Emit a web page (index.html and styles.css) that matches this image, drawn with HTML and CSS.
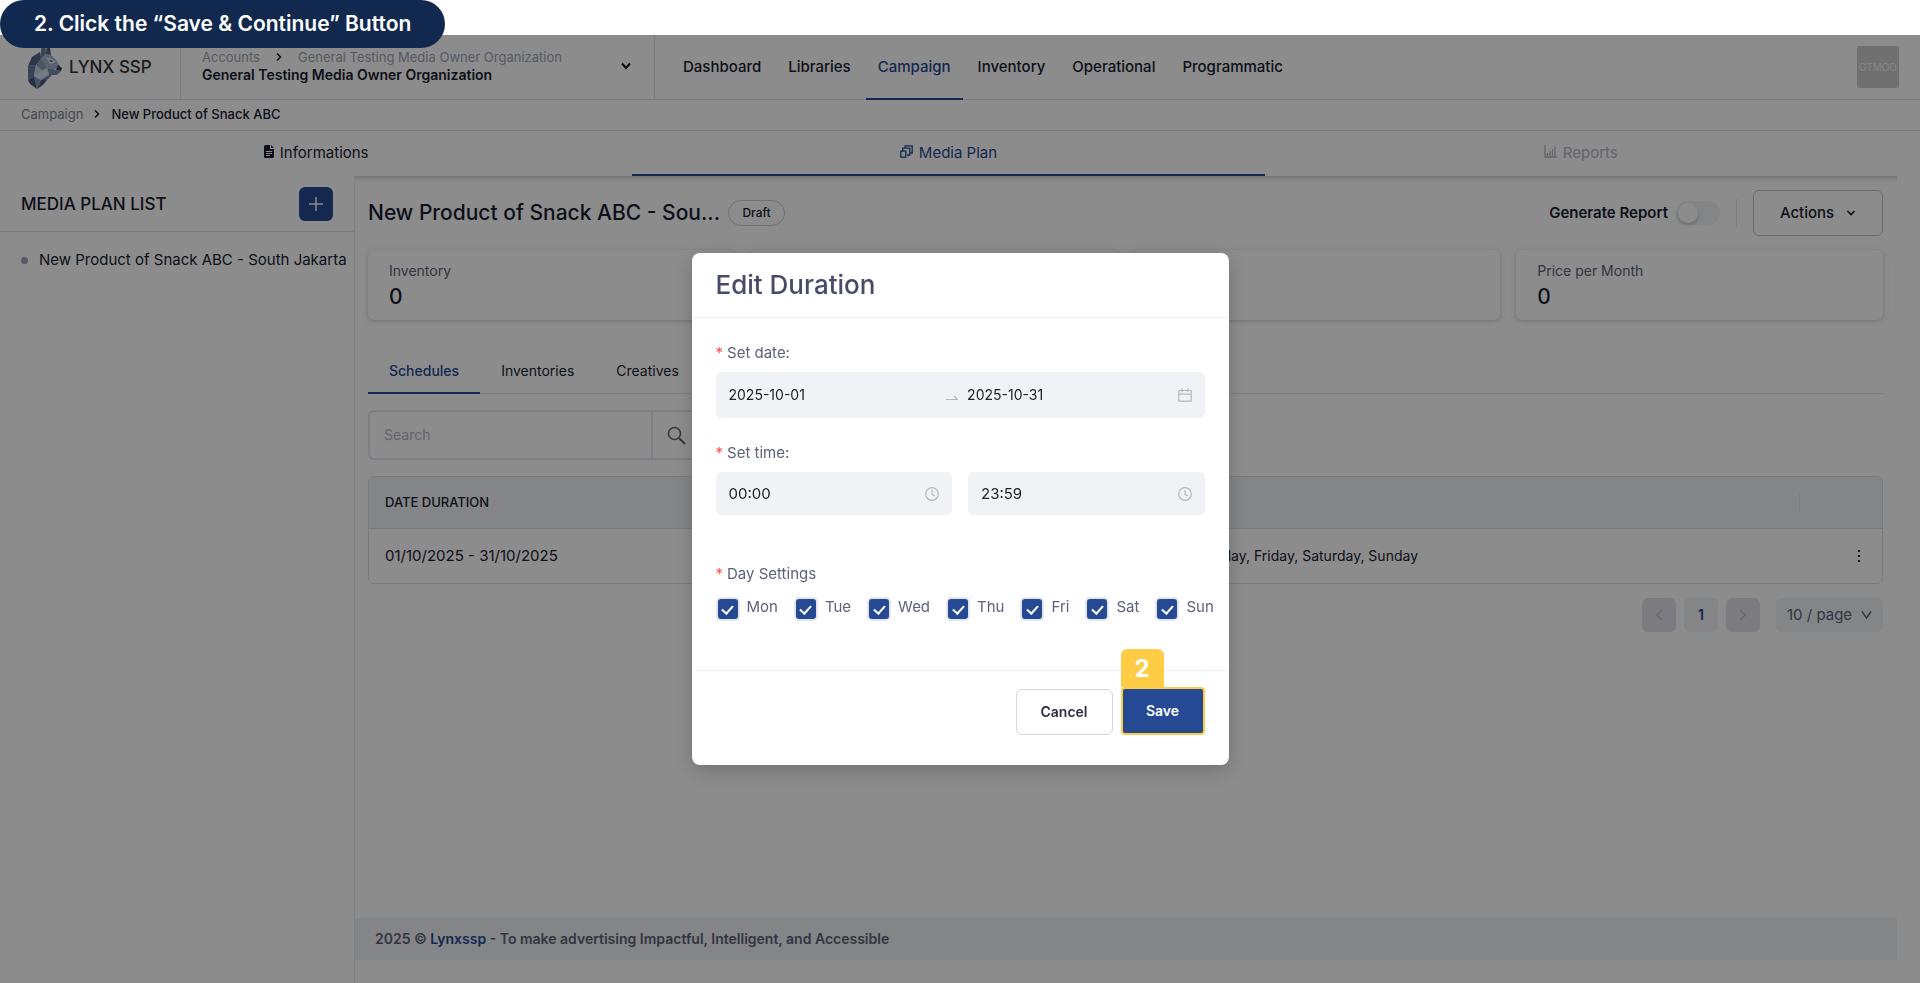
FILE: index.html
```html
<!DOCTYPE html>
<html lang="en">
<head>
<meta charset="utf-8">
<title>Lynx SSP - Media Plan</title>
<link rel="stylesheet" href="styles.css">
</head>
<body>
<div class="callout">2. Click the “Save &amp; Continue” Button</div>
<div class="app">
  <header class="header">
    <a class="logo" href="#">
      <svg width="36" height="54" viewBox="0 0 36 54" aria-hidden="true">
        <path d="M15 4 18 2 19 14 13 19Z" fill="#6a7a96"/>
        <path d="M20 3 23 8 24 15 19 14Z" fill="#52617d"/>
        <path d="M13 12 5 17 1 26 9 25 14 19Z" fill="#53658a"/>
        <path d="M13 19 19 14 24 15 29 20 33 26 27 30 20 28Z" fill="#a3b2cb"/>
        <path d="M19 17 25 19 29 22 23 24Z" fill="#e1e9f5"/>
        <path d="M22 20 26 21 24 22Z" fill="#26344f"/>
        <path d="M31 25 35 28 34 31 29 30Z" fill="#33435f"/>
        <path d="M20 28 29 30 34 31 30 35 22 35Z" fill="#7d8fae"/>
        <path d="M1 26 9 25 7 36 1 40Z" fill="#6b7da0"/>
        <path d="M9 25 14 19 20 28 15 31Z" fill="#8a9bb8"/>
        <path d="M9 25 15 31 7 36Z" fill="#c2cee2"/>
        <path d="M15 31 20 28 22 35 14 40 7 36Z" fill="#d3ddee"/>
        <path d="M22 35 26 34 20 40 14 40Z" fill="#6b7da0"/>
        <path d="M7 36 14 40 10 49Z" fill="#8396b5"/>
        <path d="M14 40 20 40 16 45 10 49Z" fill="#4d5f83"/>
        <path d="M1 40 7 36 10 49 3 44Z" fill="#46587c"/>
      </svg>
      <span>LYNX SSP</span>
    </a>
    <button class="account" type="button">
      <span class="account-text">
        <span class="account-path"><span>Accounts</span>
          <svg width="6" height="10" viewBox="0 0 6 10" aria-hidden="true"><path d="M1 1.500 4.500 5 1 8.500" fill="none" stroke="#181c32" stroke-width="1.500"/></svg>
          <span>General Testing Media Owner Organization</span></span>
        <strong>General Testing Media Owner Organization</strong>
      </span>
      <svg width="10" height="8" viewBox="0 0 10 8" aria-hidden="true"><path d="M1 1.500 5 6 9 1.500" fill="none" stroke="#111" stroke-width="2"/></svg>
    </button>
    <nav class="nav">
      <a href="#">Dashboard</a><a href="#">Libraries</a><a class="active" href="#">Campaign</a><a href="#">Inventory</a><a href="#">Operational</a><a href="#">Programmatic</a>
    </nav>
    <div class="avatar">GTMOO</div>
  </header>
  <nav class="crumbs"><a href="#">Campaign</a>
    <svg width="6" height="10" viewBox="0 0 6 10" aria-hidden="true"><path d="M1 1.500 4.500 5 1 8.500" fill="none" stroke="#181c32" stroke-width="1.500"/></svg>
    <span>New Product of Snack ABC</span></nav>
  <div class="page">
    <nav class="tabs">
      <a href="#"><svg width="10" height="13" viewBox="0 0 10 13" aria-hidden="true"><path d="M1.500 0H6v4h4v7.500Q10 13 8.500 13h-7Q0 13 0 11.500v-10Q0 0 1.500 0ZM7 0l3 3H7Z" fill="#181c32"/><path d="M2 6.500h6M2 8.500h6M2 10.500h4" stroke="#fff"/></svg>Informations</a>
      <a class="active" href="#"><svg width="13" height="13" viewBox="0 0 13 13" aria-hidden="true"><path d="M5 3V.8h7.200V8H9.700M2.800 6V3.200h7V10H7M.8 6.200h5v6h-5Z" fill="none" stroke="#254a93" stroke-width="1.300"/></svg>Media Plan</a>
      <a class="off" href="#"><svg width="13" height="13" viewBox="0 0 13 13" aria-hidden="true"><path d="M1 0v12h12M3.500 11V8M6 11V6M8.500 11V4M11 11V1.500" fill="none" stroke="#b5b5c3" stroke-width="1.300"/></svg>Reports</a>
    </nav>
    <div class="columns">
      <aside class="sidebar">
        <div class="side-head"><h2>MEDIA PLAN LIST</h2>
          <button type="button" class="add" aria-label="Add media plan"><svg width="14" height="14" viewBox="0 0 14 14" aria-hidden="true"><path d="M7 0v14M0 7h14" stroke="#fff" stroke-width="1.500"/></svg></button></div>
        <a class="plan" href="#"><i class="dot"></i>New Product of Snack ABC - South Jakarta</a>
      </aside>
      <div class="content">
        <main class="main">
          <div class="title-row">
            <h1>New Product of Snack ABC - Sou...</h1><span class="draft">Draft</span>
            <label class="report" for="gen">Generate Report<input id="gen" type="checkbox" role="switch"></label>
            <i class="rule"></i>
            <button type="button" class="actions">Actions<svg width="10" height="8" viewBox="0 0 10 8" aria-hidden="true"><path d="M1.500 2 5 5.500 8.500 2" fill="none" stroke="#181c32" stroke-width="1.600"/></svg></button>
          </div>
          <section class="cards">
            <div class="card"><span>Inventory</span><b>0</b></div>
            <div class="card"></div>
            <div class="card"></div>
            <div class="card"><span>Price per Month</span><b>0</b></div>
          </section>
          <nav class="subtabs"><a class="active" href="#">Schedules</a><a href="#">Inventories</a><a href="#">Creatives</a></nav>
          <div class="search"><input type="text" placeholder="Search" aria-label="Search">
            <button type="button" aria-label="Run search"><svg width="19" height="19" viewBox="0 0 19 19" aria-hidden="true"><circle cx="7.500" cy="7.500" r="6" fill="none" stroke="#666" stroke-width="1.600"/><path d="m12 12 6 6" stroke="#666" stroke-width="2"/></svg></button></div>
          <table class="table">
            <thead><tr><th>DATE DURATION</th><th></th><th class="menu"><i></i></th></tr></thead>
            <tbody><tr><td>01/10/2025 - 31/10/2025</td><td class="days-cell"><span>Thursday, Friday, Saturday, Sunday</span></td><td class="menu"><button type="button" aria-label="Row menu"><svg width="4" height="12" viewBox="0 0 4 12" aria-hidden="true"><path d="M1 0h2v2H1ZM1 5h2v2H1ZM1 10h2v2H1Z" fill="#181c32"/></svg></button></td></tr></tbody>
          </table>
          <div class="pager">
            <button type="button" class="step" aria-label="Previous page"><svg width="8" height="12" viewBox="0 0 8 12" aria-hidden="true"><path d="M7 1 1.500 6 7 11" fill="none" stroke="#a1a5b7"/></svg></button>
            <button type="button" class="current">1</button>
            <button type="button" class="step" aria-label="Next page"><svg width="8" height="12" viewBox="0 0 8 12" aria-hidden="true"><path d="M1 1 6.500 6 1 11" fill="none" stroke="#a1a5b7"/></svg></button>
            <label class="size"><select aria-label="Rows per page"><option>10 / page</option></select><svg width="11" height="8" viewBox="0 0 11 8" aria-hidden="true"><path d="M1 .5 5.500 7 10 .5" fill="none" stroke="#5e6278" stroke-width="1.400"/></svg></label>
          </div>
        </main>
        <footer class="footer">2025 © <a href="#">Lynxssp</a> - To make advertising Impactful, Intelligent, and Accessible</footer>
      </div>
    </div>
  </div>
</div>
<div class="overlay">
  <form class="modal" role="dialog" aria-labelledby="dlg">
    <h2 class="modal-title" id="dlg">Edit Duration</h2>
    <div class="modal-body">
      <label class="field-label" for="d1"><em>*</em>Set date:</label>
      <div class="field range">
        <input id="d1" type="text" value="2025-10-01">
        <svg width="12" height="12" viewBox="0 0 12 12" aria-hidden="true"><path d="M0 10.500h11.500L8 7" fill="none" stroke="#b5b5bd" stroke-width="1.200"/></svg>
        <input type="text" value="2025-10-31" aria-label="End date">
        <svg width="14" height="14" viewBox="0 0 14 14" aria-hidden="true"><path d="M.8 2.500h12.400v10.700H.8ZM.8 6.200h12.400M4 .3v4M10 .3v4" fill="none" stroke="#b7b8be" stroke-width="1.200"/></svg>
      </div>
      <label class="field-label" for="t1"><em>*</em>Set time:</label>
      <div class="times">
        <div class="field"><input id="t1" type="text" value="00:00"><svg width="14" height="14" viewBox="0 0 14 14" aria-hidden="true"><circle cx="7" cy="7" r="6.300" fill="none" stroke="#b7b8be" stroke-width="1.200"/><path d="M7 3v4.300l2.800 1.700" fill="none" stroke="#b7b8be" stroke-width="1.200"/></svg></div>
        <div class="field"><input type="text" value="23:59" aria-label="End time"><svg width="14" height="14" viewBox="0 0 14 14" aria-hidden="true"><circle cx="7" cy="7" r="6.300" fill="none" stroke="#b7b8be" stroke-width="1.200"/><path d="M7 3v4.300l2.800 1.700" fill="none" stroke="#b7b8be" stroke-width="1.200"/></svg></div>
      </div>
      <div class="field-label"><em>*</em>Day Settings</div>
      <div class="days">
        <label><input type="checkbox" checked>Mon</label>
        <label><input type="checkbox" checked>Tue</label>
        <label><input type="checkbox" checked>Wed</label>
        <label><input type="checkbox" checked>Thu</label>
        <label><input type="checkbox" checked>Fri</label>
        <label><input type="checkbox" checked>Sat</label>
        <label><input type="checkbox" checked>Sun</label>
      </div>
    </div>
    <div class="modal-foot">
      <button type="button" class="cancel">Cancel</button>
      <div class="save-wrap"><span class="badge">2</span><button type="button" class="save">Save</button></div>
    </div>
  </form>
</div>
</body>
</html>
```

FILE: styles.css
```css
* { box-sizing: border-box; }
body { margin: 0; background: #fff; color: #181c32; font: 14px/20px Inter, "Open Sans", sans-serif; overflow: hidden; }
a { color: inherit; text-decoration: none; }
button, input, select { font: inherit; color: inherit; margin: 0; border: 0; background: none; padding: 0; }
h1, h2 { margin: 0; font-weight: 500; }
svg { flex: none; display: block; }
i { display: block; }
.callout { position: absolute; z-index: 3; top: 0; left: 0; height: 48px; padding: 0 34px; border-radius: 24px; background: #11294f; color: #fff; font-size: 21px; font-weight: 600; line-height: 48px; white-space: nowrap; }
.app { margin-top: 35px; min-height: calc(100vh - 35px); display: flex; flex-direction: column; background: #fff; }
.header { display: flex; height: 65px; border-bottom: 1px solid #e0e1e8; }
.logo { width: 181px; padding: 0 0 0 27px; display: flex; align-items: center; gap: 6px; border-right: 1px solid #e0e1e8; font-size: 17px; font-weight: 500; color: #333; white-space: nowrap; }
.account { width: 474px; padding: 0 23px 2px 21px; display: flex; align-items: center; justify-content: space-between; border-right: 1px solid #e0e1e8; text-align: left; }
.account-text { display: flex; flex-direction: column; line-height: 18px; }
.account-path { display: flex; align-items: center; gap: 16px; font-size: 13px; color: #a1a5b7; }
.account strong { font-weight: 600; }
.nav { display: flex; gap: 3px; padding-left: 16px; font-size: 15px; }
.nav a { padding: 0 12px; line-height: 64px; height: 65px; font-weight: 500; }
.nav .active { color: #254a93; border-bottom: 2px solid #254a93; }
.avatar { width: 42px; height: 42px; margin: 11px 21px 0 auto; border-radius: 2px; background: #ccc; color: #f5f5f5; font-size: 10px; line-height: 42px; text-align: center; }
.crumbs { display: flex; align-items: center; gap: 11px; height: 31px; padding: 0 21px 2px; border-bottom: 1px solid #e0e1e8; font-size: 13px; }
.crumbs a { color: #7e8299; }
.crumbs span { font-weight: 500; }
.page { flex: 1; margin-right: 23px; display: flex; flex-direction: column; }
.tabs { display: flex; height: 45px; position: relative; z-index: 1; font-size: 15px; }
.tabs a { flex: 1; display: flex; align-items: center; justify-content: center; gap: 6px; border-bottom: 2px solid transparent; }
.tabs svg { margin-bottom: 2px; }
.tabs .active { color: #254a93; border-color: #254a93; }
.tabs .off { color: #b5b5c3; }
.columns { flex: 1; display: flex; }
.sidebar { width: 355px; border-right: 1px solid #e8e9ee; }
.side-head { display: flex; align-items: center; justify-content: space-between; height: 56px; padding: 0 21px; border-bottom: 1px solid #e0e1e8; }
.side-head h2 { font-size: 17px; }
.add { width: 34px; height: 34px; border-radius: 6px; background: #254a93; display: grid; place-items: center; }
.plan { display: flex; align-items: center; gap: 11px; padding: 18px 0 0 21px; font-size: 15px; white-space: nowrap; }
.dot { width: 7px; height: 7px; border-radius: 50%; background: #a1a5b7; }
.content { flex: 1; min-width: 0; display: flex; flex-direction: column; box-shadow: 0 7px 6px -6px #8889 inset; }
.main { flex: 1; padding: 14px 14px 0 13px; }
.title-row { display: flex; align-items: center; height: 46px; }
h1 { font-size: 21px; white-space: nowrap; line-height: 26px; }
.draft { margin-left: 8px; width: 57px; height: 26px; border: 1px solid #ccc; border-radius: 13px; text-align: center; font-size: 12px; font-weight: 500; line-height: 24px; }
.report { display: flex; align-items: center; gap: 8px; margin-left: auto; font-size: 15px; font-weight: 600; }
.report input { appearance: none; width: 44px; height: 24px; padding: 2px; border-radius: 12px; background: #f1f2f6; }
.report input::before { content: ""; display: block; width: 20px; height: 20px; border-radius: 50%; background: #fff; box-shadow: 0 2px 4px #0003; }
.rule { width: 1px; height: 28px; margin: 0 16px; background: #e4e6ef; }
.actions { width: 130px; height: 46px; border: 1px solid #c4c5ca; border-radius: 6px; display: flex; align-items: center; justify-content: center; gap: 12px; font-size: 15px; font-weight: 500; }
.cards { display: grid; grid-template-columns: repeat(4, 1fr); gap: 16px; margin-top: 14px; }
.card { height: 70px; padding: 11px 21px; border-radius: 6px; box-shadow: 0 1px 5px #76809066; }
.card span { display: block; color: #5e6278; }
.card b { display: block; font-size: 21px; font-weight: 500; line-height: 32px; }
.subtabs { display: flex; margin-top: 28px; height: 46px; border-bottom: 1px solid #e4e6ef; }
.subtabs a { padding: 0 21px; height: 46px; line-height: 46px; }
.subtabs .active { color: #254a93; border-bottom: 2px solid #254a93; font-weight: 500; }
.search { display: flex; width: 334px; height: 50px; margin-top: 16px; border: 2px solid #e4e6ef; border-radius: 6px; }
.search input { flex: 1; min-width: 0; padding-left: 14px; }
.search input::placeholder { color: #b5b5c3; opacity: 1; }
.search button { width: 49px; border-left: 2px solid #e4e6ef; display: grid; place-items: center; }
.table { width: 100%; margin-top: 16px; border: 1px solid #dcdee6; border-radius: 6px; border-spacing: 0; table-layout: fixed; overflow: hidden; font-size: 15px; }
.table th { height: 52px; padding: 0 16px 2px; background: #f1f2f6; border-bottom: 1px solid #dcdee6; text-align: left; font-size: 13px; font-weight: 500; }
.table td { height: 54px; padding: 0 16px; }
.table .menu { width: 83px; padding: 0; }
.menu i { width: 1px; height: 20px; background: #e4e6ef; }
.menu button { display: block; margin: 0 21px 0 auto; }
.table .days-cell { font-size: 14px; white-space: nowrap; }
.days-cell span { display: block; width: 318px; text-align: right; }
.pager { display: flex; justify-content: flex-end; gap: 8px; margin-top: 14px; }
.pager button { width: 34px; height: 34px; border-radius: 6px; background: #f1f2f6; display: grid; place-items: center; }
.pager .step { background: #e0e1ea; }
.pager .current { color: #254a93; font-weight: 600; }
.size { width: 107px; height: 34px; margin-left: 8px; padding: 0 11px; border-radius: 6px; background: #f1f2f6; color: #5e6278; display: flex; align-items: center; justify-content: space-between; font-size: 15px; }
.size select { appearance: none; }
.footer { height: 42px; margin-bottom: 23px; padding-left: 20px; background: #f1f2f6; color: #5e6278; font-weight: 600; line-height: 42px; }
.footer a { color: #254a93; }
.overlay { position: fixed; inset: 35px 0 0; z-index: 2; background: #00000073; display: flex; justify-content: center; align-items: flex-start; }
.modal { width: 537px; margin-top: 218px; border-radius: 8px; background: #fff; box-shadow: 0 6px 20px #0003; color: #5e6278; font-size: 15px; }
.modal-title { height: 65px; padding-left: 24px; border-bottom: 1px solid #eff0f3; font-size: 26px; line-height: 63px; color: #474b69; }
.modal-body { height: 352px; padding: 25px 24px 0; }
.field-label { display: flex; gap: 4px; }
.field-label em { color: #ff4d4f; font-style: normal; }
.field { display: flex; align-items: center; height: 43px; padding: 0 13px; border-radius: 6px; background: #f1f2f6; color: #222; }
.field input { flex: 1; min-width: 0; }
.range { height: 46px; margin: 9px 0 25px; font-size: 14px; }
.range input:first-child { flex: 0 0 47%; }
.range input + svg { margin-right: 9px; }
.range input:last-of-type + svg { margin-right: 0; }
.times { display: grid; grid-template-columns: repeat(2, minmax(0, 1fr)); gap: 16px; margin: 9px 0 49px; }
.days { display: flex; gap: 18px; margin-top: 15px; padding-left: 2px; white-space: nowrap; }
.days label { display: flex; gap: 9px; line-height: 16px; }
.days input { appearance: none; flex: none; width: 20px; height: 20px; border-radius: 3px; background: #254a93; box-shadow: 0 0 0 2px #e4e6ef; display: grid; place-items: center; }
.days input::before { content: ""; width: 5px; height: 9px; margin-bottom: 1px; border: solid #fff; border-width: 0 2px 2px 0; transform: rotate(42deg); }
.modal-foot { margin: 0 3px; padding: 16px 21px 30px; border-top: 1px solid #eff0f3; display: flex; justify-content: flex-end; align-items: flex-end; gap: 8px; font-size: 14px; }
.cancel { width: 97px; height: 46px; border: 1px solid #d5d6da; border-radius: 6px; color: #2b2d42; font-weight: 600; }
.save-wrap { position: relative; }
.save { display: block; width: 84px; height: 48px; border: 2px solid #ffcc45; border-radius: 4px; background: #254a93; color: #fff; font-weight: 600; }
.badge { position: absolute; bottom: 100%; left: 0; width: 43px; height: 38px; border-radius: 6px 6px 0 0; background: #ffcc45; color: #fff; font-size: 24px; font-weight: 700; line-height: 40px; text-align: center; }
```
